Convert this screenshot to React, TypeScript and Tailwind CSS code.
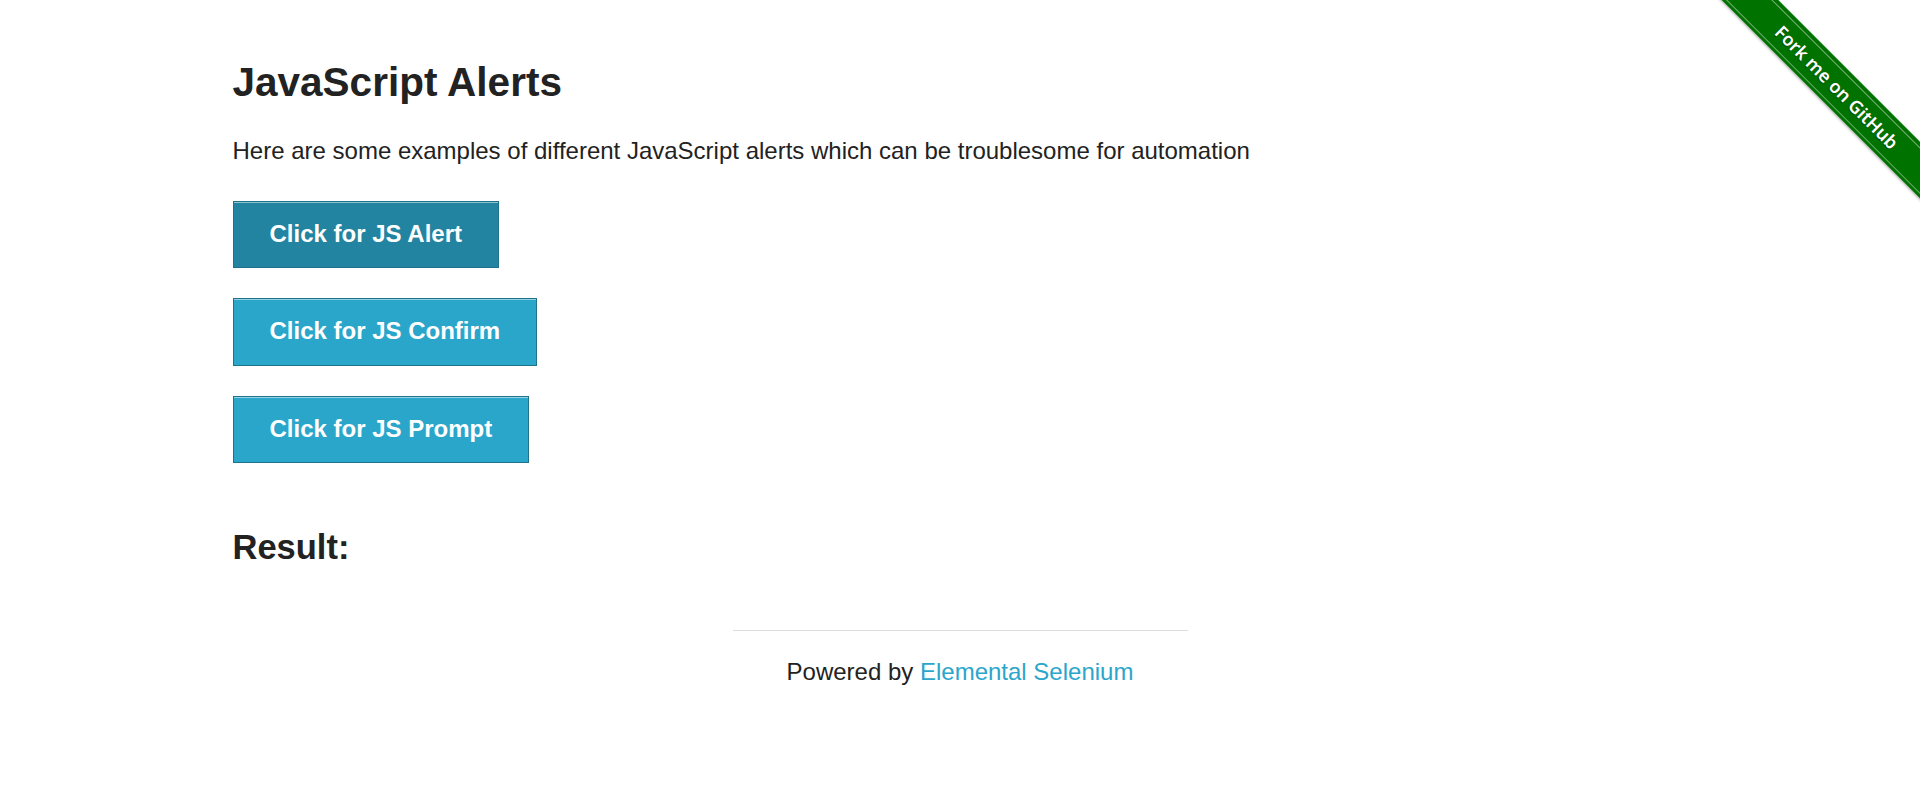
export default function App() {
  const buttons = [
    { label: "Click for JS Alert", active: true },
    { label: "Click for JS Confirm", active: false },
    { label: "Click for JS Prompt", active: false },
  ];

  return (
    <div className="relative min-h-[800px] bg-white font-['Liberation_Sans',Arial,sans-serif] text-[#222222]">
      {/* fork ribbon */}
      <div className="absolute right-0 top-0 h-[224px] w-[224px] overflow-hidden">
        <div className="absolute left-[-24px] top-[67px] flex h-[40px] w-[330px] rotate-45 items-center justify-center bg-[#007200] shadow-[0_1px_3px_rgba(0,0,0,0.35)]">
          <div className="flex h-[33px] w-full items-center justify-center border-y border-[rgba(255,255,255,0.45)]">
            <span className="font-['Noto_Sans',sans-serif] text-[18px] font-semibold text-white [text-shadow:0_1px_1px_rgba(0,0,0,0.4)]">
              Fork me on GitHub
            </span>
          </div>
        </div>
      </div>

      <div className="mx-auto w-[1500px] px-[22.5px] pt-[58px]">
        <h3 className="text-[40.5px] font-bold leading-[1.2]">JavaScript Alerts</h3>
        <p className="mt-[25px] text-[24px] leading-[1.6]">
          Here are some examples of different JavaScript alerts which can be troublesome for automation
        </p>

        <ul className="mt-[31px] flex flex-col items-start gap-[30px]">
          {buttons.map((b) => (
            <li key={b.label}>
              <button
                className={`border border-[#1e728c] px-[36px] pb-[19.5px] pt-[18px] text-[24px] font-bold leading-[normal] text-white shadow-[inset_0_1px_0_rgba(255,255,255,0.5)] ${
                  b.active ? "bg-[#2284a1]" : "bg-[#2ba6cb]"
                }`}
              >
                {b.label}
              </button>
            </li>
          ))}
        </ul>

        <h4 className="mt-[64px] text-[34.5px] font-bold leading-[1.2]">Result:</h4>
      </div>

      <div className="mx-auto mt-[61px] w-[455px]">
        <hr className="border-0 border-t border-[#dddddd]" />
        <div className="mt-[22px] text-center text-[24px] leading-[1.6]">
          Powered by <a className="text-[#2ba6cb]">Elemental Selenium</a>
        </div>
      </div>
    </div>
  );
}
